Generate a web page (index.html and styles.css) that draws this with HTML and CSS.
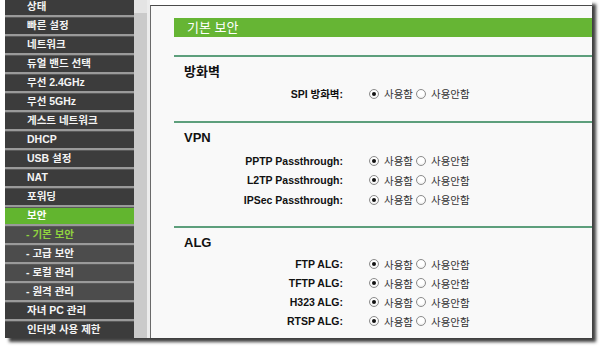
FILE: index.html
```html
<!DOCTYPE html>
<html lang="ko">
<head>
<meta charset="utf-8">
<title>기본 보안</title>
<link rel="stylesheet" href="styles.css">
</head>
<body>
<div class="frame">
  <nav class="sidebar">
    <div class="item first">상태</div>
    <div class="item">빠른 설정</div>
    <div class="item">네트워크</div>
    <div class="item">듀얼 밴드 선택</div>
    <div class="item">무선 2.4GHz</div>
    <div class="item">무선 5GHz</div>
    <div class="item">게스트 네트워크</div>
    <div class="item">DHCP</div>
    <div class="item">USB 설정</div>
    <div class="item">NAT</div>
    <div class="item">포워딩</div>
    <div class="item active">보안</div>
    <div class="item sub current">- 기본 보안</div>
    <div class="item sub">- 고급 보안</div>
    <div class="item sub">- 로컬 관리</div>
    <div class="item sub">- 원격 관리</div>
    <div class="item">자녀 PC 관리</div>
    <div class="item">인터넷 사용 제한</div>
  </nav>
  <div class="gutter"><div class="gutter-btn"></div></div>
  <main class="panel">
    <div class="titlebar">기본 보안</div>

    <section class="section">
      <h2 class="heading">방화벽</h2>
      <div class="row">
        <span class="label">SPI 방화벽:</span>
        <span class="radio on"></span><span class="opt">사용함</span>
        <span class="radio"></span><span class="opt">사용안함</span>
      </div>
    </section>

    <section class="section vpn">
      <h2 class="heading">VPN</h2>
      <div class="row">
        <span class="label">PPTP Passthrough:</span>
        <span class="radio on"></span><span class="opt">사용함</span>
        <span class="radio"></span><span class="opt">사용안함</span>
      </div>
      <div class="row">
        <span class="label">L2TP Passthrough:</span>
        <span class="radio on"></span><span class="opt">사용함</span>
        <span class="radio"></span><span class="opt">사용안함</span>
      </div>
      <div class="row">
        <span class="label">IPSec Passthrough:</span>
        <span class="radio on"></span><span class="opt">사용함</span>
        <span class="radio"></span><span class="opt">사용안함</span>
      </div>
    </section>

    <section class="section">
      <h2 class="heading">ALG</h2>
      <div class="row">
        <span class="label">FTP ALG:</span>
        <span class="radio on"></span><span class="opt">사용함</span>
        <span class="radio"></span><span class="opt">사용안함</span>
      </div>
      <div class="row">
        <span class="label">TFTP ALG:</span>
        <span class="radio on"></span><span class="opt">사용함</span>
        <span class="radio"></span><span class="opt">사용안함</span>
      </div>
      <div class="row">
        <span class="label">H323 ALG:</span>
        <span class="radio on"></span><span class="opt">사용함</span>
        <span class="radio"></span><span class="opt">사용안함</span>
      </div>
      <div class="row">
        <span class="label">RTSP ALG:</span>
        <span class="radio on"></span><span class="opt">사용함</span>
        <span class="radio"></span><span class="opt">사용안함</span>
      </div>
    </section>
  </main>
</div>
</body>
</html>
```

FILE: styles.css
```css
html, body {
  margin: 0;
  padding: 0;
  background: #ffffff;
}
body {
  width: 600px;
  height: 346px;
  overflow: hidden;
  font-family: "Liberation Sans", "Noto Sans CJK KR", sans-serif;
}
.frame {
  margin-left: 5px;
  width: 587px;
  height: 338px;
  display: flex;
  background: #ffffff;
  box-shadow: 4px 4px 3px rgba(30, 30, 30, 0.85);
  overflow: hidden;
}

/* sidebar */
.sidebar {
  width: 129px;
  flex: none;
  background: #3c3c3c;
  display: flex;
  flex-direction: column;
}
.item {
  height: 17px;
  line-height: 17px;
  border-top: 2px solid #9a9a9a;
  box-shadow: inset 0 1px 0 #5a5a5a;
  padding-left: 22px;
  color: #f4f4f4;
  font-size: 10.5px;
  font-weight: bold;
  white-space: nowrap;
  background: #3c3c3c;
}
.item.first {
  border-top: none;
  box-shadow: none;
  height: 17px;
  line-height: 12px;
}
.item.active {
  background: #62b52f;
  color: #ffffff;
}
.item.sub {
  background: #4c4c4c;
  padding-left: 21px;
}
.item.current {
  color: #8fd23f;
}

/* scroll gutter */
.gutter {
  width: 13px;
  flex: none;
  background: #cacaca;
  border-right: 3px solid #ececec;
}
.gutter-btn {
  height: 13px;
  background: #e4e4e4;
}

/* main panel */
.panel {
  flex: 1;
  margin-top: 5px;
  border-top: 1px solid #4a4a4a;
  border-left: 1px solid #6a6a6a;
  background: #f9f9f9;
  padding-left: 23px;
}
.titlebar {
  margin-top: 12px;
  height: 19px;
  line-height: 19px;
  background: #66b534;
  color: #ffffff;
  font-size: 13px;
  padding-left: 13px;
  margin-bottom: 18px;
}
.section {
  border-top: 2px solid #5d9f7c;
  padding-bottom: 18px;
}
.heading {
  margin: 7px 0 4px 10px;
  height: 16px;
  line-height: 16px;
  font-size: 13px;
  font-weight: bold;
  color: #111111;
}
.vpn .heading {
  margin-bottom: 5px;
}
.vpn .row {
  height: 19.5px;
}
.vpn {
  padding-bottom: 16px;
}
.row {
  height: 19px;
  display: flex;
  align-items: center;
}
.label {
  width: 169px;
  flex: none;
  text-align: right;
  font-size: 10.5px;
  font-weight: bold;
  color: #111111;
  margin-right: 26px;
}
.radio {
  width: 8px;
  height: 8px;
  flex: none;
  border: 1px solid #8c8c8c;
  border-radius: 50%;
  background: radial-gradient(circle at 50% 40%, #ffffff 40%, #e2e2e2 100%);
  position: relative;
}
.radio.on::after {
  content: "";
  position: absolute;
  left: 2px;
  top: 2px;
  width: 4px;
  height: 4px;
  border-radius: 50%;
  background: #111111;
}
.opt {
  font-size: 10.5px;
  color: #333333;
  margin-left: 5px;
  margin-right: 3px;
}
```
